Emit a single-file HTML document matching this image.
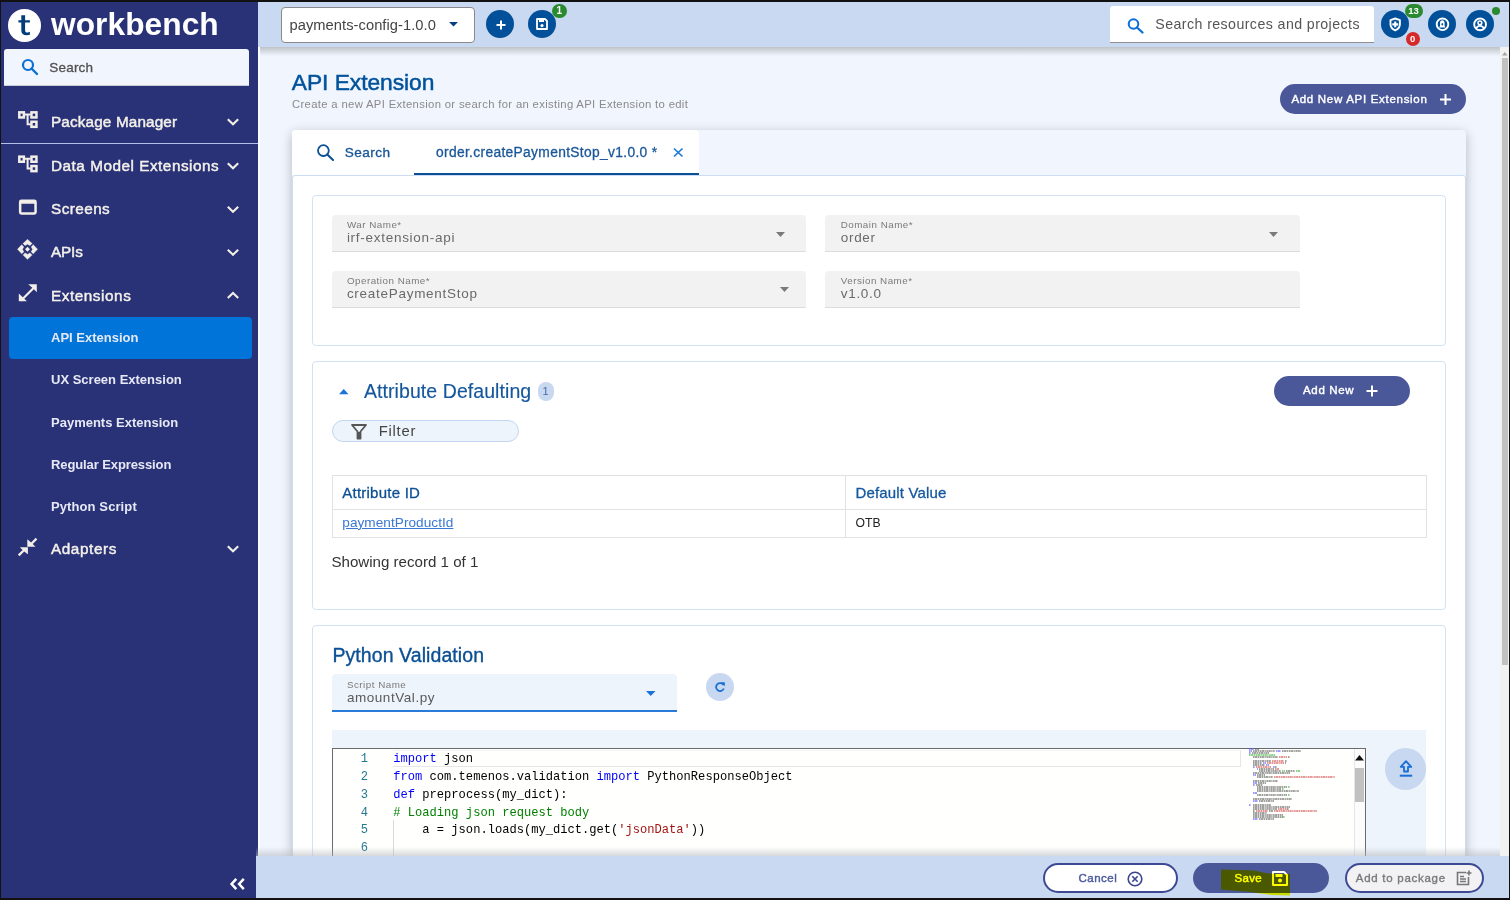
<!DOCTYPE html>
<html><head><meta charset="utf-8">
<style>
*{box-sizing:border-box;margin:0;padding:0}
html,body{width:1510px;height:900px;overflow:hidden}
body{position:relative;background:#f0f5fe;font-family:"Liberation Sans",sans-serif;color:#333}
.a{position:absolute}
.t{position:absolute;white-space:nowrap;line-height:1}
svg{position:absolute;overflow:visible}
/* sidebar */
#side{left:0;top:0;width:258px;height:900px;background:#2a3277}
.nav{color:#f4f1ea;font-size:15.3px;font-weight:400;letter-spacing:.25px;-webkit-text-stroke:.45px #f4f1ea}
.sub{color:#e6e9f5;font-size:13px;font-weight:700}
#top{left:258px;top:0;width:1252px;height:47px;background:#c9d9f1}
.fld{background:#f2f2f2;border-radius:4px 4px 0 0;border-bottom:1.2px solid #dcdcdc}
.lbl{font-size:9.8px;color:#7a7a7a;letter-spacing:.5px}
.val{font-size:13.5px;color:#6a6a6a;letter-spacing:.72px}
.code{position:absolute;font-family:"Liberation Mono",monospace;font-size:12.1px;color:#000;line-height:17.72px}
.ln{height:17.72px;white-space:pre}
.n{display:inline-block;width:20px;text-align:right;margin-right:25.3px;color:#237893}
.k{color:#0000ff}.c{color:#008000}.s{color:#a31515}
.btn2{border:2px solid #3d4a93;border-radius:15px}
</style></head>
<body>
<!-- SIDEBAR -->
<div id="side" class="a">
  <div class="a" style="left:8px;top:9px;width:32.5px;height:32.5px;border-radius:50%;background:#fff"></div>
  <svg style="left:0;top:0" width="50" height="50" viewBox="0 0 50 50"><path d="M21.3 15.3H25.1V20.2H29.9V22.5H25.1V30.2C25.1 31.9 25.9 32.6 27.4 32.6C28.3 32.6 29.2 32.4 29.9 32.1V34.8C29 35.1 27.9 35.3 26.8 35.3C23.1 35.3 21.3 33.6 21.3 30.2V22.5H18.4V20.2H21.3Z" fill="#003d7a"/></svg>
  <div class="t" style="left:51px;top:9.2px;font-size:31.7px;font-weight:700;color:#fff;letter-spacing:.05px">workbench</div>
  <div class="a" style="left:4px;top:49px;width:245px;height:37px;border-radius:3px 3px 0 0;background:#f1f5fd;border-bottom:1px solid #c9ccd6"></div>
  <svg style="left:21px;top:58px" width="18" height="17" viewBox="0 0 18 17"><circle cx="7" cy="7" r="5" fill="none" stroke="#0a6fd6" stroke-width="2.2"/><path d="M10.5 10.5 L16 16" stroke="#0a6fd6" stroke-width="2.4" stroke-linecap="round"/></svg>
  <div class="t" style="left:49.3px;top:61px;font-size:13.5px;color:#505050;letter-spacing:.2px;-webkit-text-stroke:.3px #505050">Search</div>


  <svg style="left:0;top:0" width="258" height="600" viewBox="0 0 258 600">
    <g fill="none" stroke="#f2efe8" stroke-width="2.1">
      <rect x="19.3" y="112.35" width="4.55" height="5.1" stroke-width="2.5"/><rect x="31.45" y="112.35" width="5" height="5.1" stroke-width="2.5"/><rect x="31.45" y="121.75" width="5" height="5.1" stroke-width="2.5"/>
      <path d="M25 114.5H30.5M27.6 114.5V124.2H30.5" stroke-width="2"/>
      <rect x="19.3" y="156.65" width="4.55" height="5.1" stroke-width="2.5"/><rect x="31.45" y="156.65" width="5" height="5.1" stroke-width="2.5"/><rect x="31.45" y="166.05" width="5" height="5.1" stroke-width="2.5"/>
      <path d="M25 158.8H30.5M27.6 158.8V168.5H30.5" stroke-width="2"/>
      <rect x="20.15" y="200.75" width="15.4" height="12.8" rx="1.2" stroke-width="2.5"/>
      <path d="M20 202H35.7" stroke-width="3.5"/>
      <path d="M227.8 119.3L233 124.3L238.2 119.3M227.8 163.3L233 168.3L238.2 163.3M227.8 206.7L233 211.7L238.2 206.7M227.8 249.7L233 254.7L238.2 249.7M227.8 298L233 293L238.2 298M227.8 546.3L233 551.3L238.2 546.3" stroke-width="2.1"/>
    </g>
    <g fill="#f2efe8">
      <path d="M27.5 238.9L32.5 243.6L29.9 246L27.5 244.6L25.1 246L22.6 243.6Z" stroke="#2a3277" stroke-width=".4"/>
      <path d="M27.5 259.7L32.5 255L29.9 252.6L27.5 254L25.1 252.6L22.6 255Z" stroke="#2a3277" stroke-width=".4"/>
      <path d="M17.1 249.3L21.8 244.3L24.2 246.9L22.8 249.3L24.2 251.7L21.8 254.2Z" stroke="#2a3277" stroke-width=".4"/>
      <path d="M37.9 249.3L33.2 244.3L30.8 246.9L32.2 249.3L30.8 251.7L33.2 254.2Z" stroke="#2a3277" stroke-width=".4"/>
      <path d="M27.5 246.8L30 249.3L27.5 251.8L25 249.3Z"/>
      <path d="M28.2 284.2H36.8V292.2L33.9 289.3L21.8 301.2L20.3 299.7L32.3 287.7Z"/>
      <path d="M18.8 293.6V301.2H26.9Z"/>
      <path d="M27.3 539.2V546.7H35.4L32.7 544L37.3 539.4L35.7 537.8L31.1 542.4Z"/>
      <path d="M27.9 554.2V547.2H19.9L22.6 549.9L17.9 554.6L19.5 556.2L24.2 551.5Z"/>
    </g>
    <path d="M236.3 878.8L231.6 884L236.3 889.2M243.8 878.8L239.1 884L243.8 889.2" fill="none" stroke="#fff" stroke-width="2.5"/>
  </svg>
  <div class="t nav" style="left:51px;top:113.8px;letter-spacing:.14px">Package Manager</div>
  <div class="a" style="left:1px;top:143.2px;width:257px;height:1.2px;background:#b4c0ea"></div>
  <div class="t nav" style="left:51px;top:157.7px;letter-spacing:.52px">Data Model Extensions</div>
  <div class="t nav" style="left:51px;top:201.1px;letter-spacing:.44px">Screens</div>
  <div class="t nav" style="left:51px;top:244.1px;letter-spacing:-.15px">APIs</div>
  <div class="t nav" style="left:51px;top:287.7px;letter-spacing:.55px">Extensions</div>
  <div class="a" style="left:8.5px;top:316.5px;width:243px;height:42px;border-radius:4px;background:#0074d9"></div>
  <div class="t sub" style="left:51px;top:331px">API Extension</div>
  <div class="t sub" style="left:51px;top:373px">UX Screen Extension</div>
  <div class="t sub" style="left:51px;top:416px">Payments Extension</div>
  <div class="t sub" style="left:51px;top:458px;letter-spacing:-.1px">Regular Expression</div>
  <div class="t sub" style="left:51px;top:499.5px;letter-spacing:.1px">Python Script</div>
  <div class="t nav" style="left:51px;top:540.7px;letter-spacing:.58px">Adapters</div>
</div>

<!-- TOP BAR -->
<div id="top" class="a"></div>
<div class="a" style="left:258px;top:47px;width:1252px;height:9px;background:linear-gradient(#bfc3c8,rgba(239,244,252,0))"></div>
<!-- project dropdown -->
<div class="a" style="left:281px;top:6.5px;width:193.5px;height:36.5px;border:1.3px solid #8a8a8a;border-radius:4px;background:#fff"></div>
<div class="t" style="left:289.5px;top:18.1px;font-size:14.7px;color:#444;letter-spacing:.05px">payments-config-1.0.0</div>
<svg style="left:449px;top:21.8px" width="9" height="4.5" viewBox="0 0 9 4.5"><path d="M0 0H9L4.5 4.5Z" fill="#0a3f80"/></svg>
<!-- plus circle -->
<div class="a" style="left:486.3px;top:10.3px;width:28px;height:28px;border-radius:50%;background:#02509a"></div>
<svg style="left:494.5px;top:18.5px" width="12" height="12" viewBox="0 0 12 12"><path d="M6 1.5V10.5M1.5 6H10.5" stroke="#fff" stroke-width="2"/></svg>
<!-- save circle -->
<div class="a" style="left:527.6px;top:10.3px;width:28px;height:28px;border-radius:50%;background:#02509a"></div>
<svg style="left:535.5px;top:18.2px" width="12" height="12" viewBox="0 0 12 12"><path d="M1 1H9L11 3V11H1Z" fill="none" stroke="#fff" stroke-width="1.8" stroke-linejoin="round"/><rect x="3" y="1" width="5" height="3" fill="#fff"/><circle cx="6" cy="7.6" r="1.6" fill="#fff"/></svg>
<div class="a" style="left:552.3px;top:3.7px;width:14.6px;height:14.6px;border-radius:50%;background:#2a8a2f"></div>
<div class="t" style="left:556.5px;top:5.8px;font-size:10px;font-weight:700;color:#fff">1</div>
<!-- global search -->
<div class="a" style="left:1109.5px;top:6px;width:264.5px;height:36.5px;background:#fff;border-radius:3px 3px 0 0;border-bottom:1.5px solid #8f8f8f"></div>
<svg style="left:1127px;top:17.5px" width="18" height="15" viewBox="0 0 18 15"><circle cx="6.5" cy="6" r="4.8" fill="none" stroke="#0a6fd6" stroke-width="2"/><path d="M10 9.5 L15.5 14.5" stroke="#0a6fd6" stroke-width="2.3" stroke-linecap="round"/></svg>
<div class="t" style="left:1155.3px;top:17.4px;font-size:14.2px;color:#555;letter-spacing:.42px">Search resources and projects</div>
<!-- right icons -->
<div class="a" style="left:1381px;top:10px;width:28.2px;height:28.2px;border-radius:50%;background:#02509a"></div>
<svg style="left:1389px;top:17px" width="13" height="15" viewBox="0 0 13 15"><path d="M6.2 1.5L10.9 3.1V7.2C10.9 10 9 12.2 6.2 13.4C3.4 12.2 1.5 10 1.5 7.2V3.1Z" fill="none" stroke="#fff" stroke-width="1.9" stroke-linejoin="round"/><path d="M5.2 4.6H7.3V6.3H9.2V8.6H7.3V10.2H5.2V8.6H3.3V6.3H5.2Z" fill="#fff"/></svg>
<div class="a" style="left:1405px;top:4.2px;width:18px;height:14.3px;border-radius:7px;background:#2a8a2f"></div>
<div class="t" style="left:1408.3px;top:6.3px;font-size:9.5px;font-weight:700;color:#fff">13</div>
<div class="a" style="left:1405.7px;top:31.5px;width:14.3px;height:14.3px;border-radius:50%;background:#d62a2a"></div>
<div class="t" style="left:1410px;top:33.6px;font-size:9.5px;font-weight:700;color:#fff">0</div>
<div class="a" style="left:1428px;top:10px;width:28.2px;height:28.2px;border-radius:50%;background:#02509a"></div>
<svg style="left:1435px;top:17px" width="15" height="15" viewBox="0 0 15 15"><circle cx="7.5" cy="7.3" r="5.8" fill="none" stroke="#fff" stroke-width="1.9"/><path d="M7.3 3.2C8.8 3.2 9.6 4.5 9.6 6.2V9L10.6 10.6H4L5 9V6.2C5 4.5 5.8 3.2 7.3 3.2Z" fill="#fff"/><ellipse cx="7.3" cy="7.2" rx=".8" ry="1.2" fill="#02509a"/></svg>
<div class="a" style="left:1466px;top:10px;width:28.2px;height:28.2px;border-radius:50%;background:#02509a"></div>
<svg style="left:1473px;top:17px" width="15" height="15" viewBox="0 0 15 15"><circle cx="7.1" cy="7.4" r="5.9" fill="none" stroke="#fff" stroke-width="1.9"/><circle cx="6.9" cy="5.8" r="1.9" fill="none" stroke="#fff" stroke-width="1.5"/><path d="M3 11.6C4 9.7 5.4 8.9 7 8.9C8.6 8.9 10 9.7 11 11.6" fill="none" stroke="#fff" stroke-width="1.7"/></svg>
<div class="a" style="left:1491.9px;top:7.4px;width:8px;height:8px;border-radius:50%;background:#2a8a2f"></div>

<!-- MAIN -->
<div class="a" style="left:258px;top:47px;width:2px;height:810px;background:#fbfdff"></div>
<div class="t" style="left:291.8px;top:71.2px;font-size:22.8px;color:#00529b;-webkit-text-stroke:.5px #00529b;letter-spacing:-.05px">API Extension</div>
<div class="t" style="left:292px;top:98.6px;font-size:11.3px;color:#8a8a8a;letter-spacing:.33px">Create a new API Extension or search for an existing API Extension to edit</div>
<div class="a" style="left:1280px;top:84px;width:186px;height:30px;border-radius:15px;background:#4a5899"></div>
<div class="t" style="left:1291.4px;top:93.6px;font-size:11.5px;color:#fff;letter-spacing:.7px;-webkit-text-stroke:.4px #fff">Add New API Extension</div>
<svg style="left:1439px;top:92.5px" width="13" height="13" viewBox="0 0 13 13"><path d="M6.5 1V12M1 6.5H12" stroke="#fff" stroke-width="2"/></svg>

<!-- container -->
<div class="a" style="left:292px;top:130px;width:1174px;height:770px;box-shadow:0 3px 12px rgba(0,0,0,.25);background:#f0f5fe;border-radius:4px 4px 0 0"></div>
<div class="a" style="left:292px;top:130px;width:407px;height:45px;background:#fff;border-radius:4px 4px 0 0"></div>
<svg style="left:317px;top:143.5px" width="18" height="18" viewBox="0 0 18 18"><circle cx="6.4" cy="6.6" r="5.4" fill="none" stroke="#0b4f94" stroke-width="1.8"/><path d="M10.3 10.5 L16 16" stroke="#0b4f94" stroke-width="2.1" stroke-linecap="round"/></svg>
<div class="t" style="left:344.8px;top:146.4px;font-size:13.6px;color:#1a5799;letter-spacing:.45px;-webkit-text-stroke:.35px #1a5799">Search</div>
<div class="t" style="left:436px;top:146px;font-size:13.8px;color:#1a5799;letter-spacing:.33px;-webkit-text-stroke:.3px #1a5799">order.createPaymentStop_v1.0.0 *</div>
<svg style="left:672.5px;top:147.5px" width="10.5" height="9" viewBox="0 0 10.5 9"><path d="M1 .5L9.5 8.5M9.5 .5L1 8.5" stroke="#1a7ad9" stroke-width="1.7"/></svg>
<div class="a" style="left:413.7px;top:172.5px;width:285px;height:3px;background:#0b4f94"></div>

<!-- white panel -->
<div class="a" style="left:292px;top:175px;width:1174px;height:725px;background:#fff;border:1px solid #cbdcf4;border-radius:3px 3px 0 0"></div>

<!-- card 1 -->
<div class="a" style="left:312px;top:195px;width:1134px;height:150.5px;border:1.2px solid #d3e1f5;border-radius:4px"></div>
<div class="a fld" style="left:332px;top:215px;width:474px;height:37px"></div>
<div class="t lbl" style="left:346.9px;top:220px">War Name*</div>
<div class="t val" style="left:346.9px;top:231.3px">irf-extension-api</div>
<svg style="left:775.5px;top:231.5px" width="9" height="5" viewBox="0 0 9 5"><path d="M0 0H9L4.5 5Z" fill="#7a7a7a"/></svg>
<div class="a fld" style="left:825px;top:215px;width:475px;height:37px"></div>
<div class="t lbl" style="left:840.7px;top:220px">Domain Name*</div>
<div class="t val" style="left:840.7px;top:231.3px">order</div>
<svg style="left:1268.5px;top:231.5px" width="9" height="5" viewBox="0 0 9 5"><path d="M0 0H9L4.5 5Z" fill="#7a7a7a"/></svg>
<div class="a fld" style="left:332px;top:270.5px;width:474px;height:37.5px"></div>
<div class="t lbl" style="left:346.9px;top:276.4px">Operation Name*</div>
<div class="t val" style="left:346.9px;top:287px">createPaymentStop</div>
<svg style="left:779.5px;top:287px" width="9" height="5" viewBox="0 0 9 5"><path d="M0 0H9L4.5 5Z" fill="#7a7a7a"/></svg>
<div class="a fld" style="left:825px;top:270.5px;width:475px;height:37.5px"></div>
<div class="t lbl" style="left:840.7px;top:276.4px">Version Name*</div>
<div class="t val" style="left:840.7px;top:287px">v1.0.0</div>

<!-- card 2 -->
<div class="a" style="left:312px;top:361px;width:1134px;height:248.5px;border:1.2px solid #d3e1f5;border-radius:4px"></div>
<svg style="left:338.5px;top:389px" width="9.5" height="5.2" viewBox="0 0 9.5 5.2"><path d="M0 5.2H9.5L4.75 0Z" fill="#1a73d9"/></svg>
<div class="t" style="left:364px;top:381.6px;font-size:19.5px;color:#15579c;letter-spacing:.07px;-webkit-text-stroke:.15px #15579c">Attribute Defaulting</div>
<div class="a" style="left:537.8px;top:382.2px;width:16px;height:18.4px;border-radius:8px;background:#c8d8f0"></div>
<div class="t" style="left:542.6px;top:386px;font-size:11px;color:#4a6aa5">1</div>
<div class="a" style="left:1274.3px;top:375.6px;width:136px;height:30px;border-radius:15px;background:#4a5899"></div>
<div class="t" style="left:1303px;top:384.9px;font-size:11.5px;color:#fff;letter-spacing:.66px;-webkit-text-stroke:.4px #fff">Add New</div>
<svg style="left:1366px;top:384.8px" width="12" height="12" viewBox="0 0 12 12"><path d="M6 .5V11.5M.5 6H11.5" stroke="#fff" stroke-width="2"/></svg>
<div class="a" style="left:331.7px;top:420px;width:187.6px;height:22.4px;border-radius:11.2px;border:1.2px solid #c3d5f0;background:#eef4fc"></div>
<svg style="left:351px;top:423.5px" width="16" height="15.5" viewBox="0 0 16 15.5"><path d="M1 1H15L9.5 7.5V14.5H6.5V7.5Z" fill="none" stroke="#555" stroke-width="1.8" stroke-linejoin="round"/><path d="M6.5 8V15H9.5V8Z" fill="#555"/></svg>
<div class="t" style="left:378.7px;top:423.8px;font-size:14.8px;color:#444;letter-spacing:.75px">Filter</div>
<!-- table -->
<div class="a" style="left:331.5px;top:475px;width:1095px;height:62.5px;border:1.3px solid #e2e2e2"></div>
<div class="a" style="left:332px;top:509px;width:1094px;height:1.3px;background:#e2e2e2"></div>
<div class="a" style="left:844.8px;top:475px;width:1.3px;height:62px;background:#e2e2e2"></div>
<div class="t" style="left:342.3px;top:485.1px;font-size:15px;color:#0b4f94;letter-spacing:.23px;-webkit-text-stroke:.3px #0b4f94">Attribute ID</div>
<div class="t" style="left:855.5px;top:485.1px;font-size:15px;color:#1358a0;letter-spacing:.16px;-webkit-text-stroke:.3px #1358a0">Default Value</div>
<div class="t" style="left:342.3px;top:515.9px;font-size:13.6px;color:#3a78d2;text-decoration:underline;letter-spacing:.05px">paymentProductId</div>
<div class="t" style="left:855.5px;top:516.5px;font-size:12.2px;color:#222">OTB</div>
<div class="t" style="left:331.5px;top:553.7px;font-size:15.1px;color:#333">Showing record 1 of 1</div>

<!-- card 3 -->
<div class="a" style="left:312px;top:625px;width:1134px;height:300px;border:1.2px solid #d3e1f5;border-radius:4px"></div>
<div class="t" style="left:332.4px;top:646px;font-size:19.5px;color:#0b4f94;letter-spacing:.08px;-webkit-text-stroke:.35px #0b4f94">Python Validation</div>
<div class="a" style="left:331.7px;top:674.3px;width:345.5px;height:38px;background:#eef4fc;border-radius:4px 4px 0 0;border-bottom:2px solid #2a7ad9"></div>
<div class="t lbl" style="left:346.9px;top:679.7px">Script Name</div>
<div class="t val" style="left:346.9px;top:690.8px;letter-spacing:.55px;color:#5a5a5a">amountVal.py</div>
<svg style="left:646px;top:691px" width="9.5" height="5" viewBox="0 0 9.5 5"><path d="M0 0H9.5L4.75 5Z" fill="#1a73d9"/></svg>
<div class="a" style="left:705.6px;top:673px;width:28.3px;height:28.3px;border-radius:50%;background:#c8d8f0"></div>
<svg style="left:713.5px;top:681px" width="12" height="12" viewBox="0 0 12 12"><path d="M9.6 4.2A4 4 0 1 0 9.8 7.5" fill="none" stroke="#1a6fd6" stroke-width="1.8"/><path d="M6.8 1.2H10.8V5.2Z" fill="#1a6fd6"/></svg>
<!-- editor -->
<div class="a" style="left:332px;top:730px;width:1094px;height:130px;background:#eef4fc"></div>
<div class="a" style="left:331.5px;top:747.5px;width:1034.5px;height:120px;background:#fffffd;border:1.5px solid #6a6a6a;border-bottom:0"></div>
<div class="a" style="left:393px;top:749.5px;width:848px;height:17px;border:1px solid #e6e6e6;border-top-color:#f3f3f3;border-left:0"></div>
<div class="a" style="left:393.3px;top:820px;width:1px;height:36px;background:#d8d8d8"></div>
<div class="code" style="left:348px;top:751.4px">
<div class="ln"><span class="n">1</span><span class="k">import</span> json</div>
<div class="ln"><span class="n">2</span><span class="k">from</span> com.temenos.validation <span class="k">import</span> PythonResponseObject</div>
<div class="ln"><span class="n">3</span><span class="k">def</span> preprocess(my_dict):</div>
<div class="ln"><span class="n">4</span><span class="c"># Loading json request body</span></div>
<div class="ln"><span class="n">5</span>    a = json.loads(my_dict.get(<span class="s">'jsonData'</span>))</div>
<div class="ln"><span class="n">6</span></div>
</div>
<svg style="left:0;top:0" width="1510" height="900"><g stroke-width="1.3" stroke-dasharray="1.6 .4 2.4 .5 1.2 .6" opacity=".75"><path d="M1249 749.0h5" stroke="#5050ff"/><path d="M1255 749.0h4" stroke="#5a5a5a"/><path d="M1249 751.0h3" stroke="#5050ff"/><path d="M1253 751.0h22" stroke="#5a5a5a"/><path d="M1276 751.0h5" stroke="#5050ff"/><path d="M1282 751.0h19" stroke="#5a5a5a"/><path d="M1249 753.0h2" stroke="#5050ff"/><path d="M1252 753.0h17" stroke="#5a5a5a"/><path d="M1249 755.0h26" stroke="#35b035"/><path d="M1253 757.0h25" stroke="#5a5a5a"/><path d="M1279 757.0h8" stroke="#d04a4a"/><path d="M1288 757.0h2" stroke="#5a5a5a"/><path d="M1253 761.0h18" stroke="#5a5a5a"/><path d="M1272 761.0h12" stroke="#d04a4a"/><path d="M1285 761.0h2" stroke="#5a5a5a"/><path d="M1253 763.0h9" stroke="#5a5a5a"/><path d="M1263 763.0h3" stroke="#5050ff"/><path d="M1267 763.0h17" stroke="#d04a4a"/><path d="M1285 763.0h1" stroke="#5a5a5a"/><path d="M1253 765.0h12" stroke="#5a5a5a"/><path d="M1266 765.0h3" stroke="#5050ff"/><path d="M1253 767.0h2" stroke="#5050ff"/><path d="M1256 767.0h15" stroke="#d04a4a"/><path d="M1273 767.0h2" stroke="#5050ff"/><path d="M1275 767.0h2" stroke="#5a5a5a"/><path d="M1257 769.0h1" stroke="#5050ff"/><path d="M1259 769.0h15" stroke="#5a5a5a"/><path d="M1275 769.0h4" stroke="#d04a4a"/><path d="M1259 771.0h22" stroke="#5a5a5a"/><path d="M1282 771.0h3" stroke="#35b035"/><path d="M1286 771.0h9" stroke="#5a5a5a"/><path d="M1296 771.0h4" stroke="#35b035"/><path d="M1253 773.0h37" stroke="#5a5a5a"/><path d="M1253 775.0h3" stroke="#5050ff"/><path d="M1257 775.0h8" stroke="#5a5a5a"/><path d="M1257 777.0h16" stroke="#5a5a5a"/><path d="M1274 777.0h61" stroke="#d04a4a"/><path d="M1253 781.0h25" stroke="#5a5a5a"/><path d="M1253 783.0h4" stroke="#5050ff"/><path d="M1258 783.0h8" stroke="#5a5a5a"/><path d="M1253 785.0h2" stroke="#5050ff"/><path d="M1256 785.0h7" stroke="#5a5a5a"/><path d="M1257 787.0h30" stroke="#5a5a5a"/><path d="M1288 787.0h2" stroke="#35b035"/><path d="M1257 789.0h24" stroke="#5a5a5a"/><path d="M1282 789.0h2" stroke="#35b035"/><path d="M1257 791.0h42" stroke="#5a5a5a"/><path d="M1253 793.0h4" stroke="#5050ff"/><path d="M1257 795.0h30" stroke="#5a5a5a"/><path d="M1288 795.0h2" stroke="#35b035"/><path d="M1253 799.0h39" stroke="#5a5a5a"/><path d="M1253 801.0h5" stroke="#5050ff"/><path d="M1259 801.0h15" stroke="#5a5a5a"/><path d="M1249 805.0h2" stroke="#5050ff"/><path d="M1253 805.0h18" stroke="#5a5a5a"/><path d="M1253 807.0h37" stroke="#5a5a5a"/><path d="M1253 809.0h24" stroke="#5a5a5a"/><path d="M1278 809.0h9" stroke="#d04a4a"/><path d="M1287 809.0h2" stroke="#5a5a5a"/><path d="M1253 811.0h2" stroke="#5a5a5a"/><path d="M1256 811.0h12" stroke="#d04a4a"/><path d="M1269 811.0h4" stroke="#5a5a5a"/><path d="M1274 811.0h43" stroke="#d04a4a"/><path d="M1253 813.0h14" stroke="#5a5a5a"/><path d="M1253 815.0h30" stroke="#5a5a5a"/><path d="M1253 817.0h30" stroke="#5a5a5a"/><path d="M1283 817.0h2" stroke="#35b035"/><path d="M1253 819.0h5" stroke="#5050ff"/><path d="M1259 819.0h15" stroke="#5a5a5a"/></g></svg>
<div class="a" style="left:1354px;top:749px;width:11px;height:110px;background:#fcfcfc;border-left:1px solid #e6e6e6"></div>
<svg style="left:1355px;top:755px" width="9" height="6" viewBox="0 0 9 6"><path d="M0 5.5H9L4.5 0Z" fill="#111"/></svg>
<div class="a" style="left:1355px;top:768px;width:9px;height:34px;background:#c1c1c1"></div>
<div class="a" style="left:1385px;top:748.3px;width:41.3px;height:41.3px;border-radius:50%;background:#c8d8f0"></div>
<svg style="left:1398.5px;top:760px" width="14" height="17" viewBox="0 0 14 17"><path d="M7 1.2L12.3 6.8H9V11.5H5V6.8H1.7Z" fill="none" stroke="#1a6fd6" stroke-width="1.8" stroke-linejoin="round"/><path d="M0.8 15.7H13.2" stroke="#1a6fd6" stroke-width="2"/></svg>

<!-- bottom bar -->
<div class="a" style="left:256px;top:847px;width:1254px;height:9px;background:linear-gradient(rgba(180,184,190,0),rgba(180,184,190,.55))"></div>
<div class="a" style="left:256px;top:855.7px;width:1254px;height:44px;background:#c9d9f1"></div>
<div class="a btn2" style="left:1043.3px;top:863.4px;width:134.5px;height:29.4px;background:#fff"></div>
<div class="t" style="left:1078.4px;top:872.6px;font-size:11.5px;color:#4b5a9c;letter-spacing:.53px;-webkit-text-stroke:.4px #4b5a9c">Cancel</div>
<svg style="left:1126.6px;top:870.6px" width="16" height="16" viewBox="0 0 16 16"><circle cx="8" cy="8" r="6.8" fill="none" stroke="#3a4590" stroke-width="1.6"/><path d="M5.3 5.3L10.7 10.7M10.7 5.3L5.3 10.7" stroke="#3a4590" stroke-width="1.6"/></svg>
<div class="a" style="left:1193.4px;top:863px;width:135.5px;height:30px;border-radius:15px;background:#4a5899"></div>
<div class="t" style="left:1234.6px;top:872.6px;font-size:11.5px;color:#fff;letter-spacing:.25px;-webkit-text-stroke:.45px #fff">Save</div>
<svg style="left:1271.5px;top:870.8px" width="16" height="15" viewBox="0 0 16 15"><path d="M1 1H12L15 4V14H1Z" fill="none" stroke="#fff" stroke-width="1.9" stroke-linejoin="round"/><rect x="3.5" y="3" width="7" height="3" fill="#fff"/><circle cx="8" cy="9.6" r="2" fill="#fff"/></svg>
<div class="a btn2" style="left:1344.5px;top:863.4px;width:139.5px;height:29.4px;background:#f2f2f4"></div>
<div class="t" style="left:1355.8px;top:872.6px;font-size:11.5px;color:#7a7a7a;letter-spacing:.72px;-webkit-text-stroke:.35px #7a7a7a">Add to package</div>
<svg style="left:1456px;top:870px" width="16" height="16" viewBox="0 0 16 16"><path d="M10 2.5H1.5V14.5H12.5V7" fill="none" stroke="#777" stroke-width="1.6"/><path d="M4 6.5H8M4 9H10M4 11.5H10" stroke="#777" stroke-width="1.3"/><path d="M13 .5V5.5M10.5 3H15.5" stroke="#777" stroke-width="1.6"/></svg>
<!-- highlighter -->
<svg style="left:0;top:0;mix-blend-mode:multiply" width="1510" height="900"><path d="M1221 869.5L1254 870.5L1268 873.5L1290 874V895.5L1272 895L1250 892L1232 890.5L1221 889.5Z" fill="#ffff00"/></svg>

<!-- page scrollbar -->
<div class="a" style="left:1500px;top:47px;width:9px;height:809px;background:#f1f1f1"></div>
<svg style="left:1502px;top:51.5px" width="5.5" height="3.5" viewBox="0 0 5.5 3.5"><path d="M0 3.5H5.5L2.75 0Z" fill="#a3a3a3"/></svg>
<div class="a" style="left:1501.6px;top:57.6px;width:6.4px;height:607px;background:#c1c1c1"></div>

<!-- frame borders -->
<div class="a" style="left:0;top:0;width:1510px;height:1.5px;background:#111"></div>
<div class="a" style="left:0;top:0;width:1.2px;height:900px;background:#111"></div>
<div class="a" style="left:1508.8px;top:0;width:1.2px;height:900px;background:#111"></div>
<div class="a" style="left:0;top:898px;width:1510px;height:2px;background:#111"></div>
</body></html>
